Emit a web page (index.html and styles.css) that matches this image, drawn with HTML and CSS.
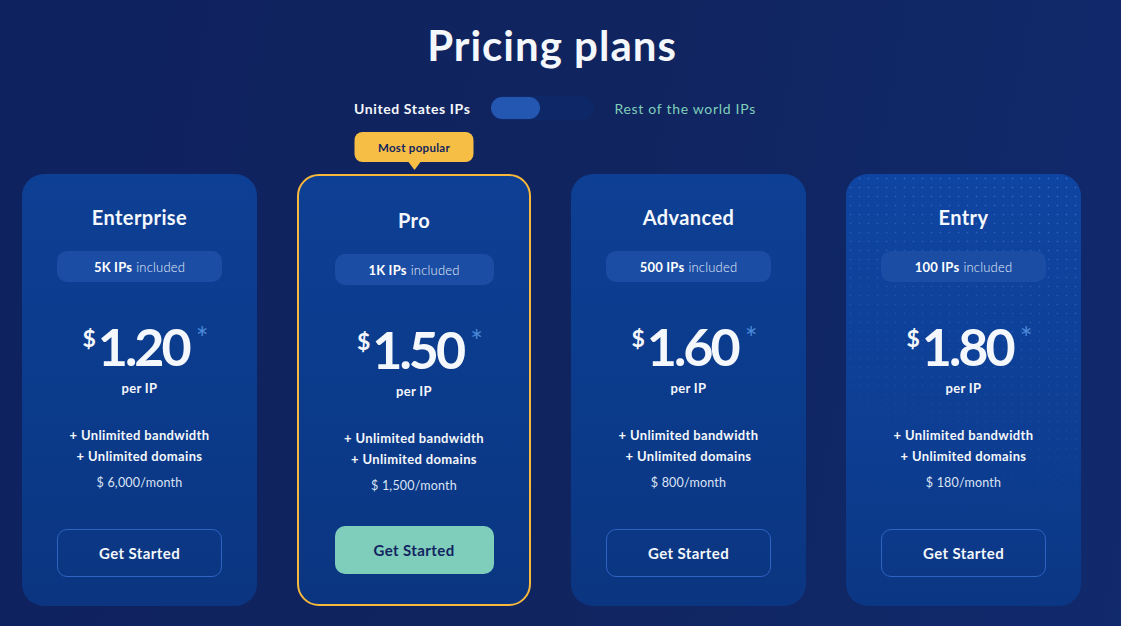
FILE: index.html
```html
<!DOCTYPE html>
<html>
<head>
<meta charset="utf-8">
<link rel="stylesheet" href="styles.css">
</head>
<body>
<main class="page">
  <h1 class="title">Pricing plans</h1>
  <div class="switch">
    <span class="switch-label active">United States IPs</span>
    <span class="toggle"><span class="knob"></span></span>
    <span class="switch-label other">Rest of the world IPs</span>
  </div>
  <div class="cards">
    <section class="card">
      <h2 class="plan">Enterprise</h2>
      <div class="pill"><b>5K IPs</b> included</div>
      <div class="price"><span class="cur">$</span><span class="amount">1.20</span><span class="star">*</span></div>
      <div class="per">per IP</div>
      <ul class="features"><li>+ Unlimited bandwidth</li><li>+ Unlimited domains</li></ul>
      <div class="month">$ 6,000/month</div>
      <a class="btn">Get Started</a>
    </section>
    <section class="card popular">
      <div class="badge">Most popular</div>
      <h2 class="plan">Pro</h2>
      <div class="pill"><b>1K IPs</b> included</div>
      <div class="price"><span class="cur">$</span><span class="amount">1.50</span><span class="star">*</span></div>
      <div class="per">per IP</div>
      <ul class="features"><li>+ Unlimited bandwidth</li><li>+ Unlimited domains</li></ul>
      <div class="month">$ 1,500/month</div>
      <a class="btn primary">Get Started</a>
    </section>
    <section class="card">
      <h2 class="plan">Advanced</h2>
      <div class="pill"><b>500 IPs</b> included</div>
      <div class="price"><span class="cur">$</span><span class="amount">1.60</span><span class="star">*</span></div>
      <div class="per">per IP</div>
      <ul class="features"><li>+ Unlimited bandwidth</li><li>+ Unlimited domains</li></ul>
      <div class="month">$ 800/month</div>
      <a class="btn">Get Started</a>
    </section>
    <section class="card dotted">
      <h2 class="plan">Entry</h2>
      <div class="pill"><b>100 IPs</b> included</div>
      <div class="price"><span class="cur">$</span><span class="amount">1.80</span><span class="star">*</span></div>
      <div class="per">per IP</div>
      <ul class="features"><li>+ Unlimited bandwidth</li><li>+ Unlimited domains</li></ul>
      <div class="month">$ 180/month</div>
      <a class="btn">Get Started</a>
    </section>
  </div>
</main>
</body>
</html>
```

FILE: styles.css
```css
* { box-sizing: border-box; }
html, body { margin: 0; padding: 0; }
body {
  width: 1121px;
  height: 626px;
  overflow: hidden;
  background: linear-gradient(100deg, #0f2260 0%, #10245f 50%, #112a6c 100%);
  font-family: Lato, "DejaVu Sans", sans-serif;
  color: #f4f7fb;
}
.page {
  width: 1104px;
  display: flex;
  flex-direction: column;
  align-items: center;
}
.title {
  margin: 22px 0 0;
  font-size: 42px;
  line-height: 46px;
  font-weight: 700;
  letter-spacing: 1px;
}
.switch {
  display: flex;
  align-items: center;
  margin-top: 28px;
  height: 24px;
  padding-left: 6px;
}
.switch-label { font-size: 14px; letter-spacing: 0.6px; }
.switch-label.active { font-weight: 700; }
.switch-label.other { color: #7fcfb9; letter-spacing: 0.7px; }
.toggle {
  width: 103px;
  height: 24px;
  border-radius: 12px;
  background: #0e2867;
  margin: 0 20px 0 21px;
  display: flex;
  align-items: center;
}
.knob {
  width: 49px;
  height: 22px;
  border-radius: 11px;
  background: #2357b1;
}
.cards {
  display: flex;
  gap: 40px;
  margin-top: 54px;
  align-self: flex-start;
  padding-left: 22px;
}
.card {
  position: relative;
  width: 235px;
  height: 432px;
  border-radius: 22px;
  background: linear-gradient(180deg, #0d3f94 0%, #0b3a8a 60%, #0b3580 100%);
  display: flex;
  flex-direction: column;
  align-items: center;
  padding-top: 31px;
}
.card.dotted {
  background: linear-gradient(180deg, #0f45a2 0%, #0d3e93 60%, #0b3683 100%);
}
.card.dotted::before {
  content: "";
  position: absolute;
  inset: 0;
  border-radius: 22px;
  background: radial-gradient(circle, rgba(110,160,240,0.45) 0.7px, transparent 1.1px) 0 0 / 9px 9px;
  -webkit-mask-image: linear-gradient(200deg, rgba(0,0,0,1) 0%, rgba(0,0,0,0.5) 35%, rgba(0,0,0,0) 75%);
  mask-image: linear-gradient(200deg, rgba(0,0,0,1) 0%, rgba(0,0,0,0.5) 35%, rgba(0,0,0,0) 75%);
  pointer-events: none;
}
.card > * { position: relative; }
.card.popular {
  width: 234px;
  border: 2px solid #f7b83b;
  border-radius: 22px;
  padding-top: 32px;
}
.card .badge {
  position: absolute;
  top: -44px;
  left: 50%;
  transform: translateX(-50%);
  width: 119px;
  height: 30px;
  border-radius: 8px;
  background: #f7be45;
  color: #11245f;
  font-size: 11.5px;
  font-weight: 700;
  letter-spacing: 0.3px;
  display: flex;
  align-items: center;
  justify-content: center;
}
.badge::after {
  content: "";
  position: absolute;
  bottom: -8px;
  left: 50%;
  margin-left: -6px;
  border-left: 6px solid transparent;
  border-right: 6px solid transparent;
  border-top: 8px solid #f7be45;
}
.plan {
  margin: 0;
  font-size: 20px;
  line-height: 24px;
  font-weight: 700;
  letter-spacing: 0.4px;
}
.pill {
  margin-top: 22px;
  width: 165px;
  height: 31px;
  border-radius: 10px;
  background: #1a4da3;
  font-size: 13px;
  font-weight: 300;
  display: flex;
  align-items: center;
  justify-content: center;
  gap: 4px;
  color: #e6eefb;
  letter-spacing: 0.2px;
}
.popular .pill { width: 159px; }
.pill b { font-weight: 700; color: #fff; }
.price {
  margin-top: 36px;
  height: 56px;
  display: flex;
  align-items: center;
  padding-left: 12px;
}
.cur {
  font-size: 23px;
  font-weight: 700;
  align-self: flex-start;
  margin-top: 6px;
  margin-right: 2px;
}
.amount {
  font-size: 52px;
  line-height: 56px;
  font-weight: 700;
  letter-spacing: -3px;
}
.star {
  align-self: flex-start;
  color: #4a88d8;
  font-size: 30px;
  font-weight: 400;
  margin-left: 7px;
  margin-top: 1px;
}
.per {
  margin-top: 5px;
  font-size: 13px;
  line-height: 18px;
  font-weight: 700;
  letter-spacing: 0.3px;
}
.features {
  list-style: none;
  margin: 28px 0 0;
  padding: 0;
  text-align: center;
  font-size: 13px;
  line-height: 21px;
  font-weight: 700;
  letter-spacing: 0.35px;
}
.month {
  margin-top: 6px;
  font-size: 12.5px;
  line-height: 20px;
  color: #dbe4f5;
  letter-spacing: 0.2px;
}
.btn {
  margin-top: 36px;
  width: 165px;
  height: 48px;
  border-radius: 10px;
  border: 1px solid #2f63c2;
  display: flex;
  align-items: center;
  justify-content: center;
  font-size: 15px;
  font-weight: 700;
  letter-spacing: 0.4px;
  color: #f4f7fb;
}
.btn.primary {
  margin-top: 30px;
  width: 159px;
  border: none;
  background: #7fcdbb;
  color: #11245f;
}
```
